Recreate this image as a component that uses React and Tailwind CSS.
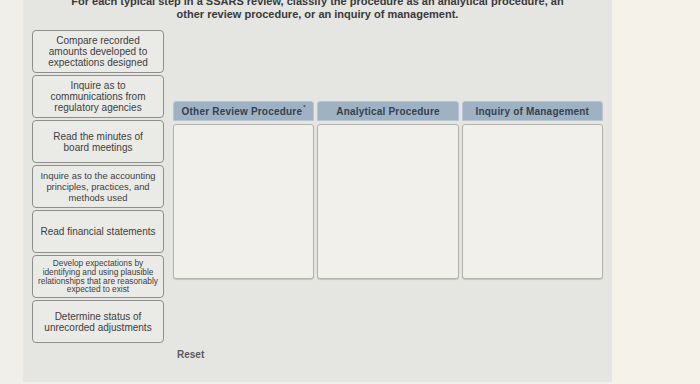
import React from "react";

const cards = [
  { l: ["Compare recorded", "amounts developed to", "expectations designed"] },
  { l: ["Inquire as to", "communications from", "regulatory agencies"] },
  { l: ["Read the minutes of", "board meetings"] },
  { l: ["Inquire as to the accounting", "principles, practices, and", "methods used"], mid: true },
  { l: ["Read financial statements"] },
  {
    l: ["Develop expectations by", "identifying and using plausible", "relationships that are reasonably", "expected to exist"],
    small: true,
  },
  { l: ["Determine status of", "unrecorded adjustments"] },
];

const cols = ["Other Review Procedure", "Analytical Procedure", "Inquiry of Management"];

export default function App() {
  return (
    <div
      className="w-[700px] h-[384px] flex bg-[#f0efea] overflow-hidden"
      style={{ fontFamily: '"Liberation Sans", Arial, sans-serif' }}
    >
      <div className="w-[23px] shrink-0" />
      <div className="w-[589px] h-[382px] shrink-0 bg-[#e5e5e2] flex flex-col">
        <div className="-mt-[5px] text-center text-[11px] leading-[13px] font-bold text-[#3a3a3a]">
          <div>For each typical step in a SSARS review, classify the procedure as an analytical procedure, an</div>
          <div>other review procedure, or an inquiry of management.</div>
        </div>
        <div className="flex mt-[9px] pl-[9px]">
          <div className="w-[132px] flex flex-col gap-[2px]">
            {cards.map((c, i) => (
              <div
                key={i}
                className={
                  "h-[43px] rounded-[4px] border border-[#8e8e8c] bg-[#eaeae7] flex flex-col items-center justify-center text-center text-[#404040] whitespace-nowrap " +
                  (c.small
                    ? "text-[8.3px] leading-[8.8px]"
                    : c.mid
                    ? "text-[9.4px] leading-[11px]"
                    : "text-[10px] leading-[11px]")
                }
              >
                {c.l.map((line, j) => (
                  <div key={j}>{line}</div>
                ))}
              </div>
            ))}
          </div>
          <div className="ml-[9px] w-[430px] flex flex-col">
            <div className="mt-[71px] grid grid-cols-3 gap-[3px]">
              {cols.map((c, i) => (
                <div
                  key={i}
                  className="h-[20px] rounded-t-[3px] bg-[#9fb2c4] border border-[#b9c6d2] flex items-center justify-center text-[10px] font-bold text-[#34414f] tracking-[0.2px]"
                >
                  {c}
                  {i === 0 && <sup className="text-[6px] ml-[1px] -mt-[2px]">*</sup>}
                </div>
              ))}
            </div>
            <div className="mt-[3px] grid grid-cols-3 gap-[3px]">
              {cols.map((c, i) => (
                <div
                  key={i}
                  className="h-[155px] rounded-[3px] border border-[#b3b3ae] bg-[#f1f0eb] shadow-[0_1px_1px_rgba(0,0,0,0.15)]"
                />
              ))}
            </div>
            <div className="mt-[68px] pl-[4px] text-[10px] font-bold text-[#5a5a5a]">Reset</div>
          </div>
        </div>
      </div>
      <div className="flex-1 bg-[#f5f2ea]" />
    </div>
  );
}
